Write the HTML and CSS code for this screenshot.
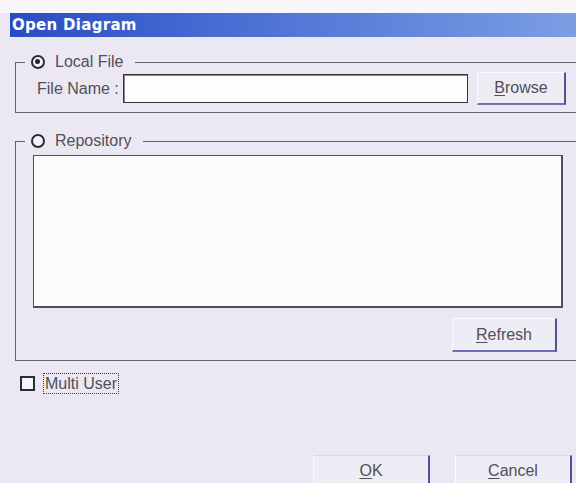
FILE: index.html
```html
<!DOCTYPE html>
<html lang="en">
<head>
<meta charset="utf-8">
<title>Open Diagram</title>
<link rel="stylesheet" href="styles.css">
</head>
<body>
<div class="dialog">
  <div class="titlebar">Open Diagram</div>
  <div class="client">
    <fieldset class="group group-local">
      <legend class="group-label">
        <span class="radio checked"></span>
        <span>Local File</span>
      </legend>
      <div class="file-row">
        <label class="file-label" for="fname">File Name :</label>
        <input class="text-input" id="fname" type="text">
        <button class="btn btn-browse" type="button"><u>B</u>rowse</button>
      </div>
    </fieldset>

    <fieldset class="group group-repo">
      <legend class="group-label">
        <span class="radio"></span>
        <span>Repository</span>
      </legend>
      <div class="repo-body">
        <div class="listbox"></div>
        <button class="btn btn-refresh" type="button"><u>R</u>efresh</button>
      </div>
    </fieldset>

    <div class="check-row">
      <span class="checkbox"></span>
      <span class="focus-label">Multi User</span>
    </div>

    <div class="action-row">
      <button class="btn btn-action" type="button"><u>O</u>K</button>
      <button class="btn btn-action" type="button"><u>C</u>ancel</button>
    </div>
  </div>
</div>
</body>
</html>
```
FILE: styles.css
```css
html, body {
  margin: 0;
  padding: 0;
}

body {
  width: 576px;
  height: 483px;
  overflow: hidden;
  background: linear-gradient(#f7f7f9 0, #f7f7f9 13px, #ebe8f3 13px);
  font-family: "Liberation Sans", Arial, sans-serif;
  font-size: 16px;
  color: #505058;
}

.dialog {
  display: flex;
  flex-direction: column;
}

/* caption bar */
.titlebar {
  margin: 13px 0 0 10px;
  height: 24px;
  line-height: 24px;
  padding-left: 2px;
  background: linear-gradient(90deg, #2a4cc2 0%, #4a6fd4 40%, #7b9ee3 100%);
  color: #ffffff;
  font-family: "DejaVu Sans", sans-serif;
  font-weight: bold;
  font-size: 15px;
  letter-spacing: 0.3px;
}

.client {
  display: flex;
  flex-direction: column;
  padding-left: 15px;
}

/* group boxes */
.group {
  margin: 16px -12px 0 0;
  padding: 0;
  min-width: 0;
  border: 1px solid #62626c;
}

.group-repo {
  margin-top: 19px;
}

.group-label {
  display: flex;
  align-items: center;
  gap: 10px;
  height: 18px;
  line-height: 18px;
  margin-left: 9px;
  padding: 0 12px 0 6px;
}

.radio {
  box-sizing: border-box;
  width: 14px;
  height: 14px;
  border: 2.5px solid #2c2c34;
  border-radius: 50%;
  background: #f4f3f8;
  position: relative;
}

.radio.checked::after {
  content: "";
  position: absolute;
  left: 2px;
  top: 2px;
  width: 5px;
  height: 5px;
  border-radius: 50%;
  background: #24242c;
}

.file-row {
  display: flex;
  align-items: center;
  margin-top: 1px;
  padding: 0 0 7px 21px;
  height: 33px;
}

.file-label {
  width: 86px;
}

.text-input {
  box-sizing: border-box;
  width: 345px;
  height: 29px;
  margin: 0 9px 0 0;
  border: 1px solid #34343a;
  box-shadow: inset 1px 1px 0 #8a8a92;
  background: #fdfdfd;
  font: inherit;
}

/* push buttons */
.btn {
  box-sizing: border-box;
  background: #eeedf5;
  border: none;
  border-top: 1px solid #fbfbfd;
  border-left: 1px solid #fbfbfd;
  border-right: 2px solid #50529a;
  border-bottom: 2px solid #6d6fb8;
  font-family: "Liberation Sans", Arial, sans-serif;
  font-size: 16px;
  color: #505058;
  padding: 0;
}

.btn u {
  text-decoration-thickness: 1px;
  text-underline-offset: 2px;
}

.btn-browse {
  width: 89px;
  height: 33px;
}

.repo-body {
  display: flex;
  flex-direction: column;
  width: 530px;
  padding: 5px 0 8px 17px;
}

.listbox {
  box-sizing: border-box;
  height: 153px;
  background: #fbfcfb;
  border: 1px solid #505058;
  border-right-width: 2px;
  border-bottom-width: 2px;
}

.btn-refresh {
  align-self: flex-end;
  margin: 10px 6px 0 0;
  width: 105px;
  height: 34px;
}

/* option checkbox */
.check-row {
  display: flex;
  align-items: center;
  gap: 8px;
  margin: 11px 0 0 5px;
  height: 22px;
}

.checkbox {
  width: 11px;
  height: 11px;
  border: 2px solid #2c2c36;
  background: #f6f5f9;
}

.focus-label {
  border: 1px dotted #3c3c44;
  padding: 1px;
  line-height: 17px;
}

.action-row {
  display: flex;
  gap: 25px;
  margin: 61px 0 0 298px;
}

.btn-action {
  width: 117px;
  height: 32px;
  border-top-color: #d9d8e2;
}
```
